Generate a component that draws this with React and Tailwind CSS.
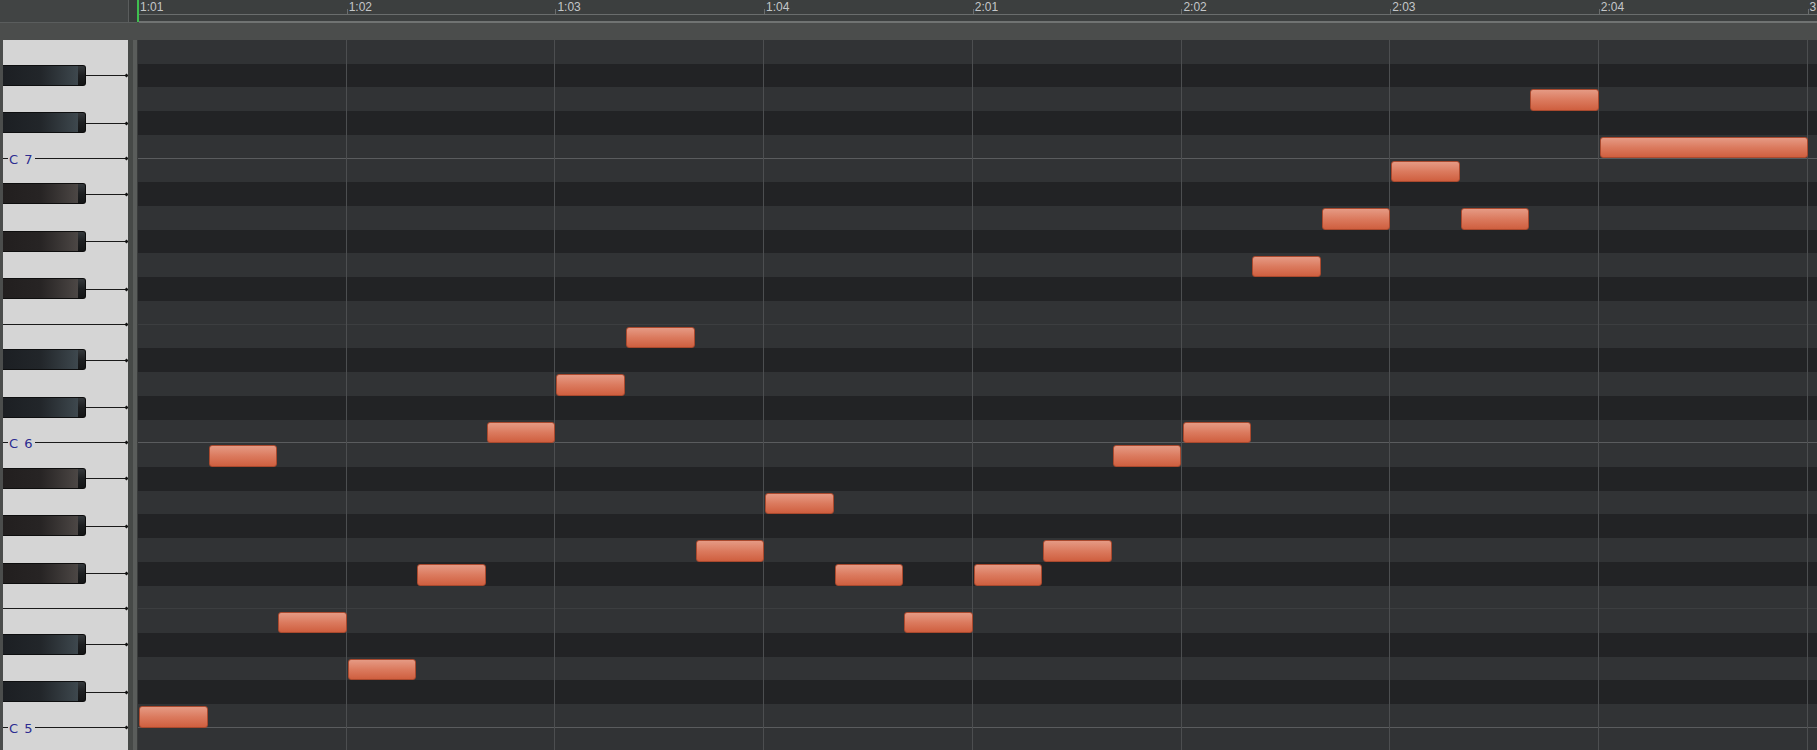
import React from 'react';

const ROWS = 30;
const ROW_H = 23.73;
const BEAT = 208.7;
const STEP = BEAT / 3;

// col in triplet steps, row from top (0 = E7)
const NOTES = [
  [0, 28], [1, 17], [2, 24], [3, 26], [4, 22], [5, 16], [6, 14], [7, 12],
  [8, 21], [9, 19], [10, 22], [11, 24], [12, 22], [13, 21], [14, 17], [15, 16],
  [16, 9], [17, 7], [18, 5], [19, 7], [20, 2], [21, 4, 3],
];

const LABELS = ['1:01', '1:02', '1:03', '1:04', '2:01', '2:02', '2:03', '2:04', '3'];

const pc = (i) => (((4 - i) % 12) + 12) % 12;
const isBlack = (p) => [1, 3, 6, 8, 10].includes(p);
const octave = (i) => 7 - Math.floor((i - 4) / 12);

const BlackKey = ({ blue }) => (
  <div className="flex items-center h-full">
    <div className="flex h-[21px] mt-[-1px] w-[83px]">
      <div
        className={
          blue
            ? 'flex-1 border-y border-[#0e0f10] bg-gradient-to-r from-[#1c1f23] via-[#22262a] to-[#3e484e]'
            : 'flex-1 border-y border-[#0e0e0e] bg-gradient-to-r from-[#221f1f] via-[#272424] to-[#4c4745]'
        }
      />
      <div className="w-[8px] rounded-r-[3px] border border-l-0 border-[#0c0c0c] bg-gradient-to-b from-[#34383b] via-[#1d1f21] to-[#141516]" />
    </div>
    <div className="flex-1 h-px bg-[#1a1a1a]" />
    <div className="w-[3px] h-[3px] bg-[#111] rotate-45" />
  </div>
);

const PianoRow = ({ i }) => {
  const p = pc(i);
  if (isBlack(p)) {
    return (
      <div className="h-[23.73px] shrink-0">
        <BlackKey blue={p === 1 || p === 3} />
      </div>
    );
  }
  const line = p === 0 || p === 5;
  return (
    <div className="h-[23.73px] shrink-0 relative">
      {line && (
        <div className="absolute left-0 right-0 bottom-0 flex items-center h-px">
          <div className="flex-1 h-px bg-[#1a1a1a]" />
          <div className="w-[3px] h-[3px] bg-[#111] rotate-45" />
        </div>
      )}
      {p === 0 && (
        <span className="absolute left-[5px] bottom-[-8px] px-[1px] bg-[#d5d5d5] text-[13px] leading-[15px] text-[#2c2c90] font-['DejaVu_Sans',sans-serif] tracking-[1px]">
          C {octave(i)}
        </span>
      )}
    </div>
  );
};

const GridRow = ({ i }) => {
  const p = pc(i);
  const bg = isBlack(p) ? 'bg-[#222325]' : 'bg-[#313335]';
  const border =
    p === 0 ? 'border-b border-[#5a5c5e]' : p === 5 ? 'border-b border-[#3c3e40]' : '';
  return <div className={`h-[23.73px] shrink-0 box-border ${bg} ${border}`} />;
};

export default function App() {
  return (
    <div className="w-[1817px] h-[750px] overflow-hidden bg-[#4b4d4c] flex flex-col font-['Liberation_Sans',sans-serif]">
      {/* ruler */}
      <div className="flex h-[23px] shrink-0">
        <div className="w-[129px] shrink-0 bg-[#414444] border-r border-b border-[#5a5d5d]" />
        <div className="w-[8px] shrink-0 bg-[#383b3b] border-b border-[#5a5d5d]" />
        <div className="w-[2px] shrink-0 h-[22px] bg-[#3fbf4f]" />
        <div className="flex-1 flex flex-col bg-[#3c3f3f] overflow-hidden">
          <div className="flex h-[15px] border-b border-[#6a6d6d] ml-[-1px] text-[12px] leading-[13px]">
            {LABELS.map((l, k) => (
              <div key={k} className="w-[208.7px] shrink-0 relative pt-[1px]">
                <span className="pl-[2px] text-[#c4c7c9]">{l}</span>
                <div className="absolute left-0 bottom-0 h-[5px] w-px bg-[#6a6d6d]" />
              </div>
            ))}
          </div>
          <div className="flex-1" />
          <div className="h-[2px] bg-[#707372]" />
        </div>
      </div>
      <div className="h-[17px] shrink-0 bg-[#4b4d4c]" />

      {/* body */}
      <div className="flex flex-1 min-h-0">
        <div className="w-[3px] shrink-0 bg-[#4b4d4c]" />
        <div className="w-[125px] shrink-0 bg-[#d5d5d5] flex flex-col overflow-hidden">
          {Array.from({ length: ROWS }, (_, i) => (
            <PianoRow key={i} i={i} />
          ))}
        </div>
        <div className="w-[5px] shrink-0 bg-[#464947]" />
        <div className="w-[4px] shrink-0 bg-[#5a5d5b]" />
        <div className="w-px shrink-0 bg-[#3a3c3c]" />
        <div className="flex-1 relative overflow-hidden">
          <div className="flex flex-col">
            {Array.from({ length: ROWS }, (_, i) => (
              <GridRow key={i} i={i} />
            ))}
          </div>
          {Array.from({ length: 8 }, (_, k) => (
            <div
              key={k}
              className="absolute top-0 bottom-0 w-px bg-[#4c4e50]"
              style={{ left: (k + 1) * BEAT - 1 }}
            />
          ))}
          {NOTES.map(([c, r, len = 1], k) => (
            <div
              key={k}
              className="absolute h-[21.5px] rounded-[3px] border border-[#a9492e] bg-gradient-to-b from-[#e59a84] via-[#db7a5e] to-[#cf5f3f]"
              style={{ left: c * STEP + 1, width: len * STEP - 1, top: r * ROW_H + 2 }}
            />
          ))}
        </div>
      </div>
    </div>
  );
}
